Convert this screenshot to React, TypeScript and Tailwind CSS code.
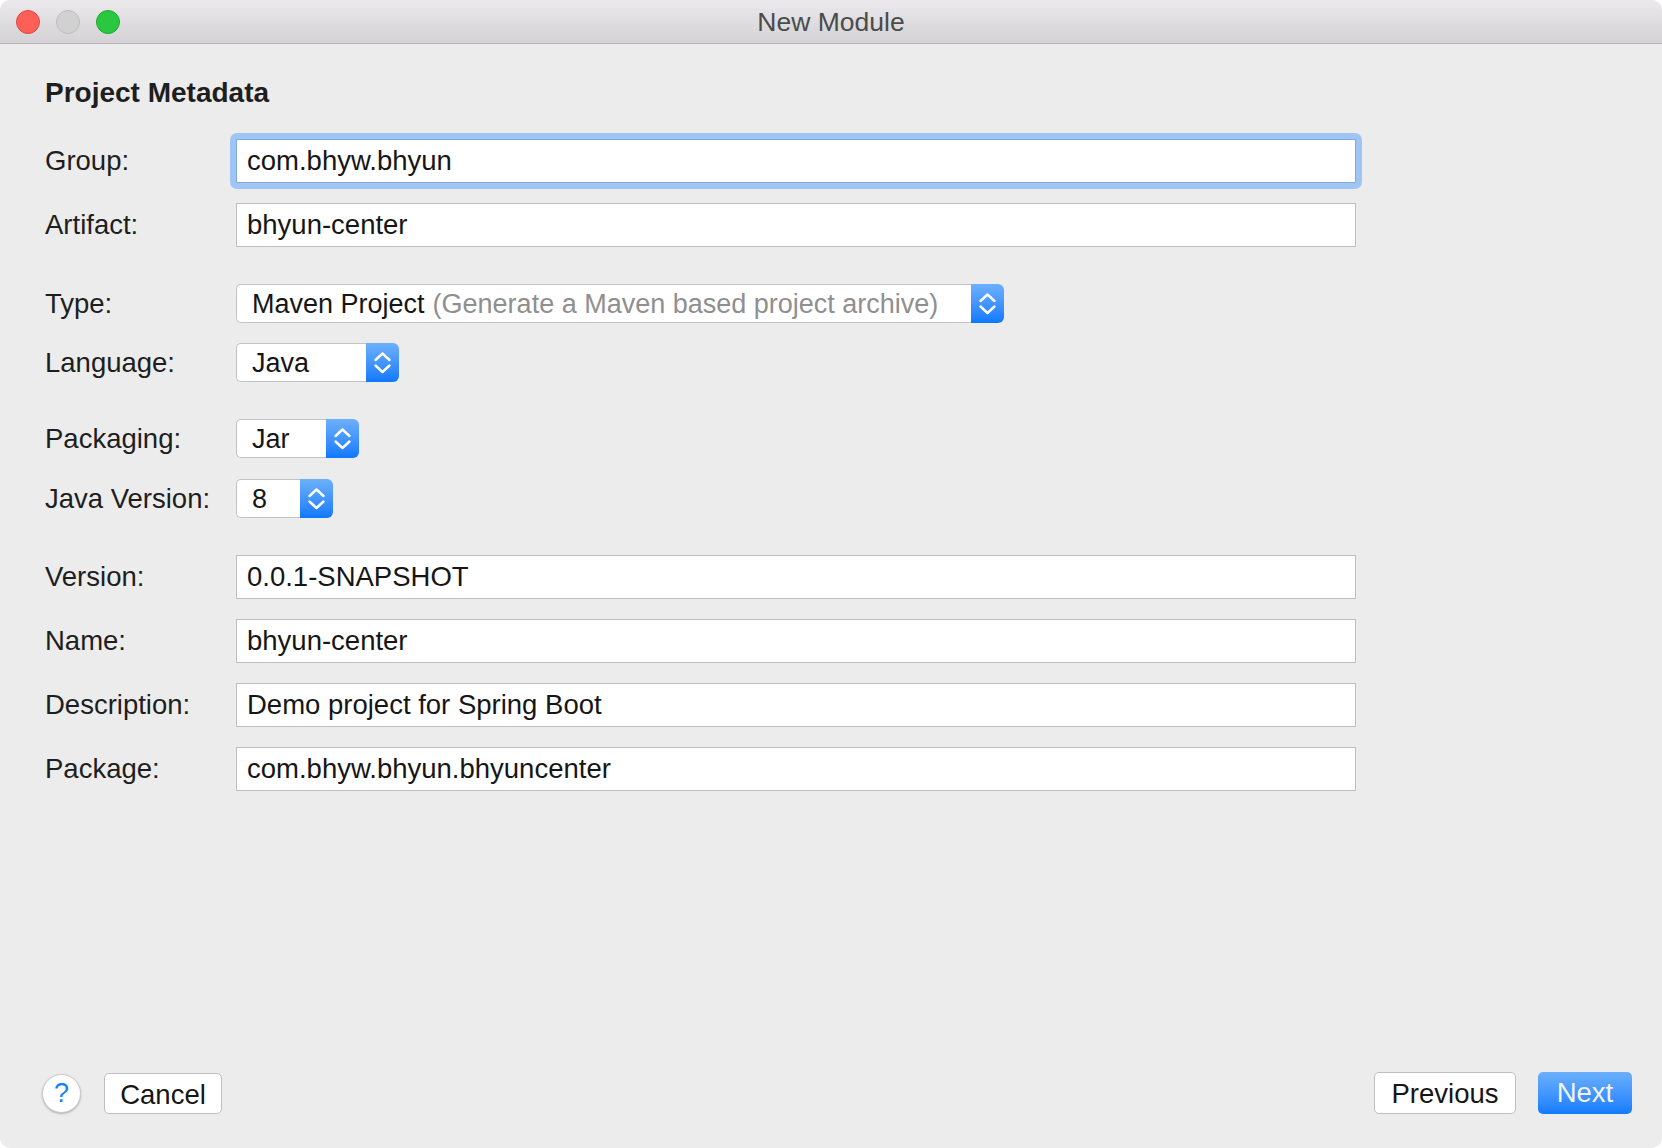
import { ReactNode } from 'react';

const FONT = { fontFamily: '"Liberation Sans", Helvetica, Arial, sans-serif' };

function Chevrons() {
  return (
    <svg width="33" height="39" viewBox="0 0 33 39" fill="none">
      <path d="M9.5 17 L16.5 10.5 L23.5 17" stroke="white" strokeWidth="2.4" strokeLinecap="round" strokeLinejoin="round" />
      <path d="M9.5 22.5 L16.5 29 L23.5 22.5" stroke="white" strokeWidth="2.4" strokeLinecap="round" strokeLinejoin="round" />
    </svg>
  );
}

function Row({ label, children }: { label: string; children: ReactNode }) {
  return (
    <div className="flex items-center">
      <div className="w-[191px] shrink-0 text-[27.5px] leading-[32px] text-[#1e1e1e]">{label}</div>
      {children}
    </div>
  );
}

function TextField({ value, focused }: { value: string; focused?: boolean }) {
  const field = (
    <div
      className={
        'w-[1120px] h-[44px] bg-white flex items-center pl-[10px] text-[27.5px] text-[#161616] border ' +
        (focused ? 'border-[#80a9dd]' : 'border-[#bebebe]')
      }
    >
      {value}
    </div>
  );
  if (!focused) return field;
  return <div className="-m-[6px] p-[6px] rounded-[7px] bg-[#9fc5f4]">{field}</div>;
}

function Select({ width, value, hint }: { width: string; value: string; hint?: string }) {
  return (
    <div className={'flex h-[39px] ' + width}>
      <div className="flex-1 flex items-center pl-[15px] bg-white border border-r-0 border-[#c3c3c3] rounded-l-[5px] text-[27px] leading-[32px] text-[#161616] whitespace-nowrap overflow-hidden">
        {value}
        {hint && <span className="ml-[8px] text-[#8f8f8f]">{hint}</span>}
      </div>
      <div className="w-[33px] shrink-0 rounded-r-[6px] bg-gradient-to-b from-[#6cb0fb] to-[#0a78fe]">
        <Chevrons />
      </div>
    </div>
  );
}

export default function App() {
  return (
    <div className="w-[1662px] h-[1148px] bg-white" style={FONT}>
      <div className="h-full flex flex-col rounded-[10px] overflow-hidden bg-[#ececec]">
        <div className="relative h-[44px] shrink-0 flex items-center justify-center bg-gradient-to-b from-[#ebe9eb] to-[#d4d2d4] border-b border-[#b4b4b4]">
          <div className="absolute left-[16px] top-[10px] flex gap-[16px]">
            <span className="w-[24px] h-[24px] rounded-full bg-[#fe5f57] border border-[#e1473f]" />
            <span className="w-[24px] h-[24px] rounded-full bg-[#d1d1d1] border border-[#bdbdbd]" />
            <span className="w-[24px] h-[24px] rounded-full bg-[#29c840] border border-[#1eaa2d]" />
          </div>
          <span className="text-[26.5px] text-[#4b4b4b] mt-[2px]">New Module</span>
        </div>

        <div className="flex-1 flex flex-col pl-[45px] pt-[33px]">
          <div className="text-[28px] font-bold text-[#1e1e1e] leading-[32px]">Project Metadata</div>

          <div className="flex flex-col gap-[20px] mt-[30px]">
            <Row label="Group:"><TextField value="com.bhyw.bhyun" focused /></Row>
            <Row label="Artifact:"><TextField value="bhyun-center" /></Row>
          </div>

          <div className="flex flex-col gap-[20px] mt-[37px]">
            <Row label="Type:">
              <Select width="w-[768px]" value="Maven Project" hint="(Generate a Maven based project archive)" />
            </Row>
            <Row label="Language:"><Select width="w-[163px]" value="Java" /></Row>
          </div>

          <div className="flex flex-col gap-[21px] mt-[37px]">
            <Row label="Packaging:"><Select width="w-[123px]" value="Jar" /></Row>
            <Row label="Java Version:"><Select width="w-[97px]" value="8" /></Row>
          </div>

          <div className="flex flex-col gap-[20px] mt-[37px]">
            <Row label="Version:"><TextField value="0.0.1-SNAPSHOT" /></Row>
            <Row label="Name:"><TextField value="bhyun-center" /></Row>
            <Row label="Description:"><TextField value="Demo project for Spring Boot" /></Row>
            <Row label="Package:"><TextField value="com.bhyw.bhyun.bhyuncenter" /></Row>
          </div>
        </div>

        <div className="flex items-center justify-between pl-[42px] pr-[30px] pb-[34px]">
          <div className="flex items-center gap-[23px]">
            <div className="w-[39px] h-[39px] rounded-full bg-white border border-[#cacaca] shadow-[0_1px_2px_rgba(0,0,0,0.25)] flex items-center justify-center text-[27px] text-[#1b7ef9]">
              ?
            </div>
            <button className="w-[118px] h-[41px] rounded-[5px] bg-white border border-[#bfbfbf] text-[27.5px] text-[#161616]">
              Cancel
            </button>
          </div>
          <div className="flex items-center gap-[22px]">
            <button className="w-[142px] h-[42px] rounded-[5px] bg-white border border-[#bfbfbf] text-[27.5px] text-[#161616]">
              Previous
            </button>
            <button className="w-[94px] h-[42px] rounded-[5px] bg-gradient-to-b from-[#6aaffc] to-[#0f7cfd] text-[27.5px] text-[#f2f2f2]">
              Next
            </button>
          </div>
        </div>
      </div>
    </div>
  );
}
